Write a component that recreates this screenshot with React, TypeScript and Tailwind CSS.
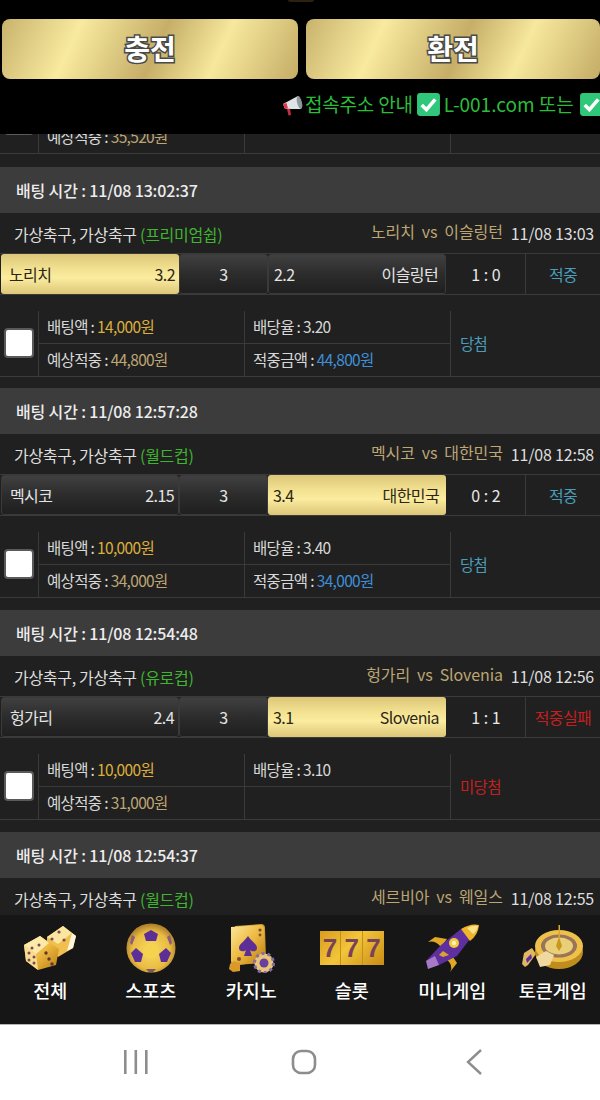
import React from "react";

type Bet = {
  time: string; league: string; home: string; away: string; at: string;
  o1: string; o2: string; o3: string; pick: "home" | "away"; score: string;
  result: string; win: boolean; bet: string; rate: string; expect: string; won?: string; gap: string;
};

const bets: Bet[] = [
  { time: "11/08 13:02:37", league: "(프리미엄쉽)", home: "노리치", away: "이슬링턴", at: "11/08 13:03", o1: "3.2", o2: "3", o3: "2.2", pick: "home", score: "1 : 0", result: "적중", win: true, bet: "14,000원", rate: "3.20", expect: "44,800원", won: "44,800원", gap: "h-[11px]" },
  { time: "11/08 12:57:28", league: "(월드컵)", home: "멕시코", away: "대한민국", at: "11/08 12:58", o1: "2.15", o2: "3", o3: "3.4", pick: "away", score: "0 : 2", result: "적중", win: true, bet: "10,000원", rate: "3.40", expect: "34,000원", won: "34,000원", gap: "h-[12px]" },
  { time: "11/08 12:54:48", league: "(유로컵)", home: "헝가리", away: "Slovenia", at: "11/08 12:56", o1: "2.4", o2: "3", o3: "3.1", pick: "away", score: "1 : 1", result: "적중실패", win: false, bet: "10,000원", rate: "3.10", expect: "31,000원", gap: "h-[12px]" },
];

const gold = "bg-[linear-gradient(to_bottom,#dcc679_0%,#f1e08f_35%,#fbec9f_60%,#dcc678_100%)] text-[#2c2616]";
const dark = "border border-[#3a3a3a] bg-[linear-gradient(to_bottom,#404040_0%,#2c2c2c_50%,#1f1f1f_100%)] text-[#e4e4e4]";

function Table({ bet, rate, expect, won, result, win, expectOnly }: { bet?: string; rate?: string; expect: string; won?: string; result?: string; win?: boolean; expectOnly?: boolean }) {
  return (
    <div className="flex h-[66px] border-b border-[#3a3a3a] text-[15.5px] tracking-[-0.66px] text-[#d8d8d8]">
      <div className="flex w-[39px] shrink-0 items-center justify-center border-r border-[#3a3a3a]">
        <div className="ml-[-1px] mt-[-2px] h-[30px] w-[30px] rounded-[4px] border-2 border-[#5a5a5a] bg-white" />
      </div>
      <div className="flex w-[411px] shrink-0 flex-col">
        <div className="flex h-[33px] border-b border-[#3a3a3a]">
          <div className="flex w-[206px] items-center border-r border-[#3a3a3a] pl-2">
            {!expectOnly && <span>배팅액 : <span className="text-[#dcae3c]">{bet}</span></span>}
          </div>
          <div className="flex w-[205px] items-center pl-2">
            {!expectOnly && <span>배당율 : {rate}</span>}
          </div>
        </div>
        <div className="flex flex-1">
          <div className="flex w-[206px] items-center border-r border-[#3a3a3a] pl-2">
            <span>예상적중 : <span className="text-[#bda673]">{expect}</span></span>
          </div>
          <div className="flex w-[205px] items-center pl-2">
            {won && <span>적중금액 : <span className="text-[#3f8fd6]">{won}</span></span>}
          </div>
        </div>
      </div>
      <div className={`flex flex-1 items-center border-l border-[#3a3a3a] pl-[9px] ${win ? "text-[#4b9cb9]" : "text-[#c4201f]"}`}>{result}</div>
    </div>
  );
}

function SectionHead({ time, league, home, away, at }: { time: string; league: string; home: string; away: string; at: string }) {
  return (
    <>
      <div className="flex h-[46px] items-center bg-[#3c3c3c] pl-4 text-[16px] font-medium tracking-[-0.15px] text-[#ededed]">배팅 시간 : {time}</div>
      <div className="flex h-[40px] items-center justify-between pl-[14px] pr-[6px] text-[16px] tracking-[-0.3px] text-[#dedede]">
        <span className="pt-[1px]">가상축구, 가상축구 <span className="text-[#3fb52f]">{league}</span></span>
        <span className="flex items-center">
          <span className="-mt-[4px] mr-[8px] tracking-[-0.1px] text-[#bda673]">{home}&nbsp; vs &nbsp;{away}</span>
          <span className="tracking-[-0.2px]">{at}</span>
        </span>
      </div>
    </>
  );
}

function Card({ b }: { b: Bet }) {
  return (
    <div>
      <SectionHead time={b.time} league={b.league} home={b.home} away={b.away} at={b.at} />
      <div className="flex h-[42px] border-b border-t border-[#3a3a3a] text-[16px] tracking-[-0.6px]">
        <div className={`ml-[1px] flex w-[178px] items-center justify-between rounded-[3px] pl-[8px] pr-[4px] ${b.pick === "home" ? gold : dark}`}>
          <span>{b.home}</span><span>{b.o1}</span>
        </div>
        <div className={`flex w-[89px] items-center justify-center rounded-[3px] ${dark}`}>{b.o2}</div>
        <div className={`flex w-[178px] items-center justify-between rounded-[3px] pl-[5px] pr-[7px] ${b.pick === "away" ? gold : dark}`}>
          <span>{b.o3}</span><span>{b.away}</span>
        </div>
        <div className="flex w-[80px] items-center justify-center border-r border-[#3a3a3a] pl-[1px] text-[16px] tracking-normal text-[#e8e8e8]">{b.score}</div>
        <div className={`flex flex-1 items-center justify-center ${b.win ? "text-[#4b9cb9]" : "text-[#c4201f]"}`}>{b.result}</div>
      </div>
      <div className="h-[16px]" />
      <Table bet={b.bet} rate={b.rate} expect={b.expect} won={b.won} result={b.win ? "당첨" : "미당첨"} win={b.win} />
      <div className={b.gap} />
    </div>
  );
}

function Check({ className }: { className: string }) {
  return (
    <svg viewBox="0 0 24 24" className={className}>
      <rect x="1" y="1" width="22" height="22" rx="3" fill="#2fc77a" />
      <path d="M5.5 12.5 L10 17 L18.5 7" stroke="#fff" strokeWidth="3.4" fill="none" />
    </svg>
  );
}

function Megaphone() {
  return (
    <svg viewBox="0 0 24 24" className="h-[24px] w-[24px] shrink-0">
      <path d="M2 11 L17 3 L20 16 L4 16 Z" fill="#dfe3e6" />
      <path d="M2 11 L4 16 L7 15.5 L5.5 10 Z" fill="#e0334a" />
      <path d="M6 16 L9 15.5 L10 22 L7.5 22.5 Z" fill="#c62c42" />
      <ellipse cx="18.5" cy="9.5" rx="2.4" ry="6.6" transform="rotate(-14 18.5 9.5)" fill="#8e979d" />
    </svg>
  );
}

function Grad({ id }: { id: string }) {
  return (
    <defs>
      <linearGradient id={id} x1="0" y1="0" x2="1" y2="1">
        <stop offset="0" stopColor="#fbe89a" />
        <stop offset="0.5" stopColor="#edb93e" />
        <stop offset="1" stopColor="#b97a14" />
      </linearGradient>
    </defs>
  );
}

function Dice() {
  const dot = "#7a4a5a";
  return (
    <svg viewBox="0 0 54 46" className="h-[46px] w-[54px]">
      <Grad id="d1" />
      <path d="M24 12 L40 1 L53 11 L50 23 L35 32 L24 20 Z" fill="#f0bf4e" />
      <path d="M24 12 L40 1 L49 8 L35 19 Z" fill="#fbe6a0" />
      <path d="M49 8 L53 11 L50 23 L44 26 Z" fill="#fff6da" />
      <circle cx="36" cy="7" r="1.6" fill={dot} /><circle cx="29" cy="14" r="1.6" fill={dot} /><circle cx="41" cy="15" r="1.6" fill={dot} />
      <path d="M1 20 L17 11 L36 24 L33 40 L15 45 L3 36 Z" fill="url(#d1)" />
      <path d="M1 20 L17 11 L26 18 L13 29 Z" fill="#fde9a8" />
      <path d="M1 20 L13 29 L15 45 L3 36 Z" fill="#f8dc90" />
      <circle cx="9" cy="23" r="1.5" fill={dot} /><circle cx="6" cy="28" r="1.5" fill={dot} /><circle cx="11" cy="32" r="1.5" fill={dot} /><circle cx="6" cy="35" r="1.5" fill={dot} /><circle cx="11" cy="38" r="1.5" fill={dot} /><circle cx="16" cy="20" r="1.5" fill={dot} />
      <circle cx="23" cy="28" r="1.7" fill="#5a3a35" /><circle cx="26" cy="34" r="1.7" fill="#5a3a35" /><circle cx="29" cy="39" r="1.7" fill="#5a3a35" />
    </svg>
  );
}

function Ball() {
  const p = "#5d2f96";
  return (
    <svg viewBox="0 0 50 50" className="h-[50px] w-[50px]">
      <defs>
        <radialGradient id="b1" cx="0.5" cy="0.55" r="0.55">
          <stop offset="0" stopColor="#f8dc62" /><stop offset="0.7" stopColor="#e9bb42" /><stop offset="1" stopColor="#a97a2a" />
        </radialGradient>
      </defs>
      <circle cx="25" cy="25" r="24.5" fill="url(#b1)" />
      <path d="M18 11 L25 7 L32 11 L30 18 L20 18 Z" fill={p} />
      <path d="M5 30 L10 25 L17 31 L15 39 L9 39 Z" fill={p} />
      <path d="M45 30 L40 25 L33 31 L35 39 L41 39 Z" fill={p} />
      <path d="M6 12 L9 14 L6 22 L4 20 Z" fill="#8a5c80" />
      <path d="M44 12 L41 14 L44 22 L46 20 Z" fill="#8a5c80" />
      <path d="M20 46 L30 46 L27 49 L23 49 Z" fill="#7a5a60" />
      <ellipse cx="25" cy="28" rx="8" ry="7.5" fill="#f4d44e" />
    </svg>
  );
}

function CardsIcon() {
  return (
    <svg viewBox="0 0 50 50" className="h-[50px] w-[50px]">
      <Grad id="c1" />
      <path d="M9 3 L35 1 Q39 1 39 5 L40 38 L13 42 Q9 42 9 38 Z" fill="#c99a32" />
      <path d="M5 4 L34 2 Q38 2 38 6 L39 36 Q39 40 35 40 L9 42 Q5 42 5 38 Z" fill="url(#c1)" />
      <path d="M22 13 C26 19 31 21 31 25 C31 29 26 29 24 27 L26 33 L18 33 L20 27 C18 29 13 29 13 25 C13 21 18 19 22 13 Z" fill="#5d2f96" />
      <circle cx="34" cy="7" r="1.6" fill="#7a4a3a" /><circle cx="34" cy="12" r="1.4" fill="#7a4a3a" />
      <circle cx="13" cy="36" r="2" fill="#7a4a3a" />
      <path d="M4 41 L8 38 L14 40 L14 48 L7 49 L3 46 Z" fill="#d99a2a" />
      <circle cx="38" cy="40" r="9.5" fill="#e8c878" />
      <circle cx="38" cy="40" r="9.5" fill="none" stroke="#8a6aa8" strokeWidth="3" strokeDasharray="3 3" />
      <circle cx="38" cy="40" r="4.5" fill="#6a3f9e" />
    </svg>
  );
}

function Slot() {
  return (
    <div className="flex h-[34px] w-[64px] bg-[linear-gradient(135deg,#d99d1c,#f2c53a_45%,#c98c14)] text-center font-['Liberation_Sans',sans-serif] text-[26px] font-bold leading-[34px] text-[#7a4258]">
      <span className="flex-1">7</span><span className="flex-1 border-x border-[#c58d1c]">7</span><span className="flex-1">7</span>
    </div>
  );
}

function Rocket() {
  return (
    <svg viewBox="0 0 58 50" className="h-[50px] w-[58px]">
      <path d="M12 14 L24 16 L18 24 Q12 17 5 19 Z" fill="#e0a824" />
      <path d="M30 34 L34 40 L27 49 Q31 42 23 36 Z" fill="#e0a824" />
      <path d="M3 38 L18 22 L38 6 L47 16 L34 33 L16 42 Z" fill="#5f2fa0" />
      <path d="M38 6 Q48 0 56 2 Q55 12 47 18 Z" fill="#eeb52c" />
      <path d="M44 5 Q50 2 55 3 Q54 8 50 11 Z" fill="#f9e08a" />
      <path d="M3 38 L12 33 L16 42 L5 46 Z" fill="#a77ac8" />
      <circle cx="31" cy="20" r="5" fill="#f3c93f" /><circle cx="31" cy="20" r="2.2" fill="#fff3b0" />
      <path d="M20 28 L26 32 L20 34 L16 32 Z" fill="#d7a52f" />
    </svg>
  );
}

function Roulette() {
  return (
    <svg viewBox="0 0 62 50" className="h-[50px] w-[62px]">
      <path d="M2 30 L10 25 L14 31 L6 42 L3 44 L0 41 Z" fill="#e2b764" />
      <path d="M4 36 L9 31 L10 35 L5 40 Z" fill="#5f2fa0" />
      <ellipse cx="37" cy="26" rx="24" ry="17" fill="#c08d1c" transform="translate(0 3)" />
      <ellipse cx="37" cy="23" rx="24" ry="16" fill="#eec24a" />
      <ellipse cx="37" cy="23" rx="18" ry="11.5" fill="#9b7358" />
      <ellipse cx="37" cy="23" rx="14" ry="8.5" fill="#e9cf78" />
      <path d="M37 14 L40 23 L37 28 L34 23 Z" fill="#c9961f" />
      <path d="M36.5 2 H38 V14 H36.5 Z" fill="#d9a92f" />
      <path d="M14 34 L24 28 L32 32 L28 42 L18 44 Z" fill="#efd9a0" />
    </svg>
  );
}

const nav = [
  { label: "전체", icon: <Dice /> },
  { label: "스포츠", icon: <Ball /> },
  { label: "카지노", icon: <CardsIcon /> },
  { label: "슬롯", icon: <Slot /> },
  { label: "미니게임", icon: <Rocket /> },
  { label: "토큰게임", icon: <Roulette /> },
];

const goldBtn = "flex h-[60px] items-center justify-center rounded-[8px] bg-[linear-gradient(115deg,#c8b26c_0%,#dcc981_10%,#f8ea9f_25%,#d8c47c_42%,#c6ae68_52%,#f6e89c_72%,#e0cd84_85%,#c4ac66_100%)] pb-[2px] text-[28px] font-bold text-white [paint-order:stroke_fill] [-webkit-text-stroke:3px_#4a4a48]";

export default function App() {
  return (
    <div className="flex h-[1100px] w-[600px] flex-col overflow-hidden bg-[#202020] font-['Noto_Sans_CJK_KR','Noto_Sans',sans-serif]">
      <header className="relative z-10 h-[134px] shrink-0 bg-black">
        <div className="absolute left-[288px] top-0 h-[2px] w-[26px] rounded-b-full bg-[#2c2110]" />
        <div className="flex gap-[8px] pl-[2px] pt-[19px]">
          <div className={`w-[296px] ${goldBtn}`}>충전</div>
          <div className={`w-[294px] ${goldBtn}`}>환전</div>
        </div>
        <div className="flex h-[55px] items-center overflow-hidden whitespace-nowrap pb-[4px] pl-[281px] text-[19px] tracking-[-0.2px] text-[#2dbb3c]">
          <Megaphone />
          <span>접속주소 안내</span>
          <Check className="mx-[3px] h-[25px] w-[25px] shrink-0" />
          <span className="tracking-normal">L-001.com 또는</span>
          <Check className="ml-[5px] h-[25px] w-[25px] shrink-0" />
        </div>
      </header>

      <main className="min-h-0 flex-1 overflow-hidden">
        <div className="-mt-[46px]">
          <Table expect="35,520원" expectOnly win />
          <div className="h-[13px]" />
        </div>
        {bets.map((b) => <Card key={b.time} b={b} />)}
        <SectionHead time="11/08 12:54:37" league="(월드컵)" home="세르비아" away="웨일스" at="11/08 12:55" />
      </main>

      <nav className="flex h-[109px] shrink-0 bg-[#161616] pt-[7px]">
        {nav.map((n) => (
          <div key={n.label} className="flex w-[100.5px] shrink-0 flex-col items-center">
            <div className="flex h-[52px] items-center justify-center">{n.icon}</div>
            <div className="mt-[3px] text-[18.5px] font-medium leading-[27px] text-white">{n.label}</div>
          </div>
        ))}
      </nav>

      <footer className="flex h-[76px] shrink-0 items-center border-t border-[#b5b5b5] bg-white text-[#8d8d8d]">
        <div className="flex w-[600px] items-center pb-[1px]">
          <svg viewBox="0 0 24 26" className="ml-[124px] h-[26px] w-[24px]" fill="currentColor">
            <rect x="0" y="1" width="2.6" height="24" /><rect x="10.5" y="1" width="2.6" height="24" /><rect x="21" y="1" width="2.6" height="24" />
          </svg>
          <svg viewBox="0 0 26 26" className="ml-[143px] h-[26px] w-[26px]" fill="none" stroke="currentColor" strokeWidth="2.6">
            <rect x="2" y="2" width="22" height="22" rx="8" />
          </svg>
          <svg viewBox="0 0 18 28" className="ml-[148px] h-[28px] w-[18px]" fill="none" stroke="currentColor" strokeWidth="2.4">
            <path d="M16 2 L3 14 L16 26" />
          </svg>
        </div>
      </footer>
    </div>
  );
}
